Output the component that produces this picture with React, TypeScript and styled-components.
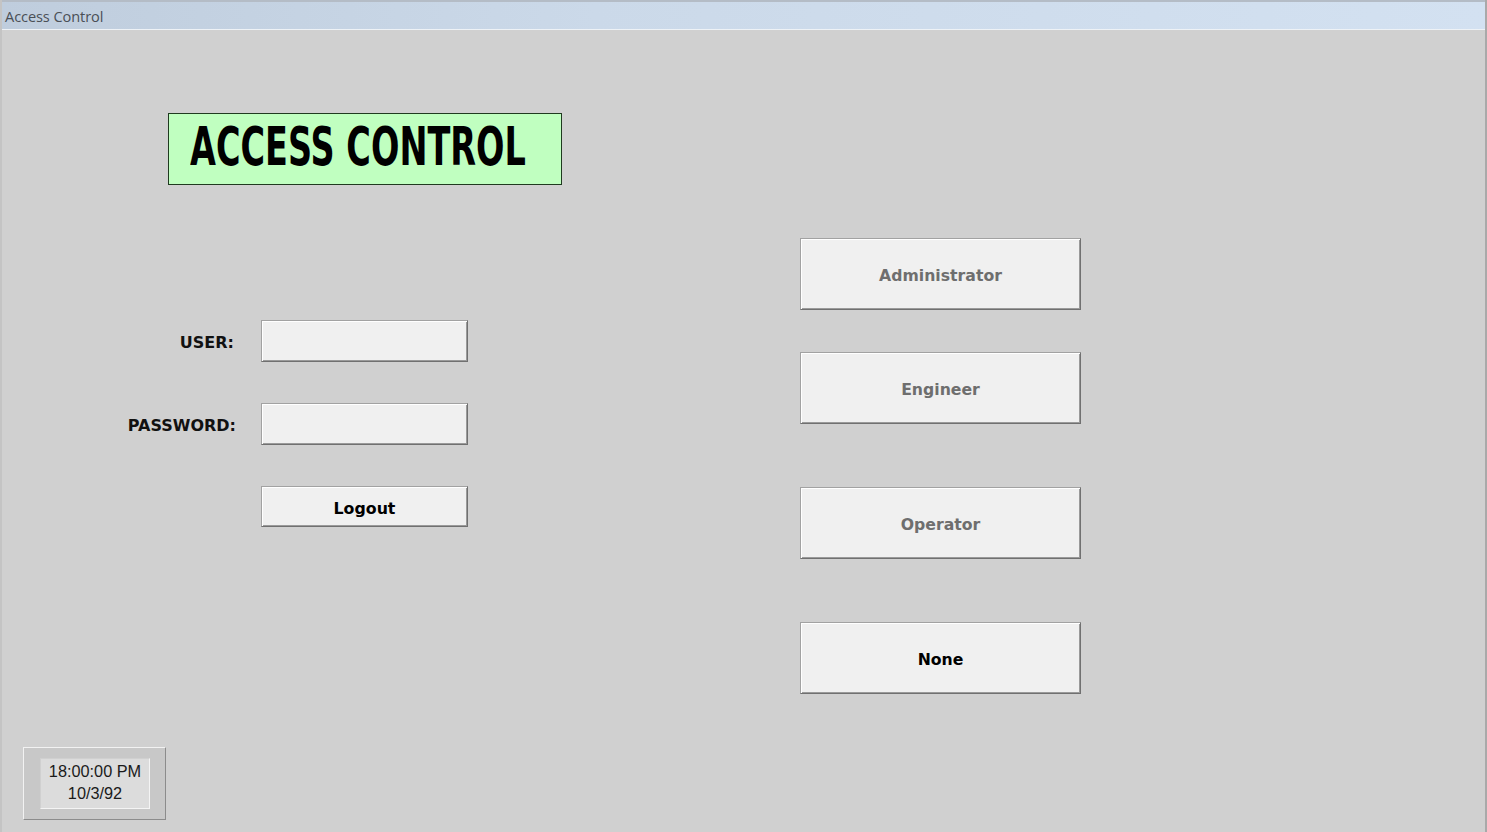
import React from "react";
import styled, { createGlobalStyle } from "styled-components";

const Global = createGlobalStyle`
  html, body { margin: 0; padding: 0; }
  body { width: 1487px; height: 832px; overflow: hidden; background: #d0d0d0; }
`;

const Window = styled.div`
  width: 1487px;
  height: 832px;
  display: flex;
  flex-direction: column;
  background: #d0d0d0;
  box-sizing: border-box;
  border-left: 2px solid #c4c4c4;
  border-right: 2px solid #a9a9a9;
`;

const TitleBar = styled.div`
  height: 27px;
  flex: none;
  display: flex;
  align-items: center;
  padding-left: 3px;
  border-top: 2px solid #b4bcc6;
  border-bottom: 1px solid #eef2f6;
  background: linear-gradient(to right, #bfcddd 0%, #cbd9e9 40%, #d3e1f1 100%);
  font-family: "Open Sans", "Noto Sans", sans-serif;
  font-size: 14.6px;
  color: #4a4f56;
  letter-spacing: -0.1px;
`;

const Main = styled.div`
  flex: 1;
  display: grid;
  grid-template-columns: 798px 1fr;
  min-height: 0;
`;

const LeftColumn = styled.div`
  display: flex;
  flex-direction: column;
  padding-top: 83px;
  padding-bottom: 12px;
`;

const Banner = styled.div`
  margin-left: 166px;
  width: 392px;
  height: 70px;
  border: 1px solid #1f3a1f;
  background: #c0ffc0;
  display: flex;
  align-items: center;
  overflow: hidden;
`;

const BannerText = styled.span`
  display: inline-block;
  margin-left: 21px;
  font-family: "DejaVu Sans", sans-serif;
  font-weight: bold;
  font-size: 53px;
  line-height: 1;
  color: #000;
  transform: scaleX(0.632);
  transform-origin: left center;
  white-space: nowrap;
  margin-top: -6px;
`;

const Form = styled.div`
  margin-top: 135px;
  display: grid;
  grid-template-columns: 234px 207px;
  column-gap: 25px;
  row-gap: 41px;
  align-items: center;
`;

const Label = styled.div`
  text-align: right;
  font-family: "DejaVu Sans", sans-serif;
  font-weight: bold;
  font-size: 16px;
  color: #111;
  padding-top: 3px;
  padding-right: ${p => (p.$pad ? p.$pad : 0)}px;
`;

const Bevel = styled.div`
  box-sizing: border-box;
  background: #f0f0f0;
  border: 1px solid;
  border-color: #a2a2a2 #707070 #707070 #a2a2a2;
  box-shadow: inset 1px 1px 0 #ffffff, inset -1px -1px 0 #9a9a9a;
`;

const Field = styled(Bevel)`
  height: 42px;
`;

const SmallButton = styled(Bevel)`
  height: 41px;
  display: flex;
  align-items: center;
  justify-content: center;
  font-family: "DejaVu Sans", sans-serif;
  font-weight: bold;
  font-size: 15.8px;
  color: #000;
  padding-top: 3px;
`;

const Clock = styled.div`
  margin-top: auto;
  margin-left: 21px;
  width: 143px;
  height: 73px;
  box-sizing: border-box;
  background: #c8c8c8;
  border: 1px solid;
  border-color: #f2f2f2 #8c8c8c #8c8c8c #f2f2f2;
  display: flex;
  align-items: flex-start;
  padding: 10px 0 0 16px;
`;

const ClockFace = styled.div`
  width: 110px;
  height: 51px;
  box-sizing: border-box;
  background: #dcdcdc;
  border: 1px solid;
  border-color: #d0d0d0 #f4f4f4 #f4f4f4 #d0d0d0;
  display: flex;
  flex-direction: column;
  align-items: center;
  justify-content: center;
  padding-bottom: 3px;
  font-family: "Liberation Sans", Arial, sans-serif;
  font-size: 16.3px;
  line-height: 22px;
  color: #1a1a1a;
`;

const RightColumn = styled.div`
  display: flex;
  flex-direction: column;
  padding-top: 208px;
`;

const RoleButton = styled(Bevel)`
  width: 281px;
  height: 72px;
  margin-top: ${p => p.$gap}px;
  display: flex;
  align-items: center;
  justify-content: center;
  font-family: "DejaVu Sans", sans-serif;
  font-weight: bold;
  font-size: 15.7px;
  color: ${p => (p.$dim ? "#6e6e6e" : "#000")};
  padding-top: 2px;
`;

export default function App() {
  return (
    <>
      <Global />
      <Window>
        <TitleBar>Access Control</TitleBar>
        <Main>
          <LeftColumn>
            <Banner>
              <BannerText>ACCESS CONTROL</BannerText>
            </Banner>
            <Form>
              <Label $pad={2}>USER:</Label>
              <Field />
              <Label>PASSWORD:</Label>
              <Field />
              <div />
              <SmallButton>Logout</SmallButton>
            </Form>
            <Clock>
              <ClockFace>
                <span>18:00:00 PM</span>
                <span>10/3/92</span>
              </ClockFace>
            </Clock>
          </LeftColumn>
          <RightColumn>
            <RoleButton $gap={0} $dim>Administrator</RoleButton>
            <RoleButton $gap={42} $dim>Engineer</RoleButton>
            <RoleButton $gap={63} $dim>Operator</RoleButton>
            <RoleButton $gap={63}>None</RoleButton>
          </RightColumn>
        </Main>
      </Window>
    </>
  );
}
